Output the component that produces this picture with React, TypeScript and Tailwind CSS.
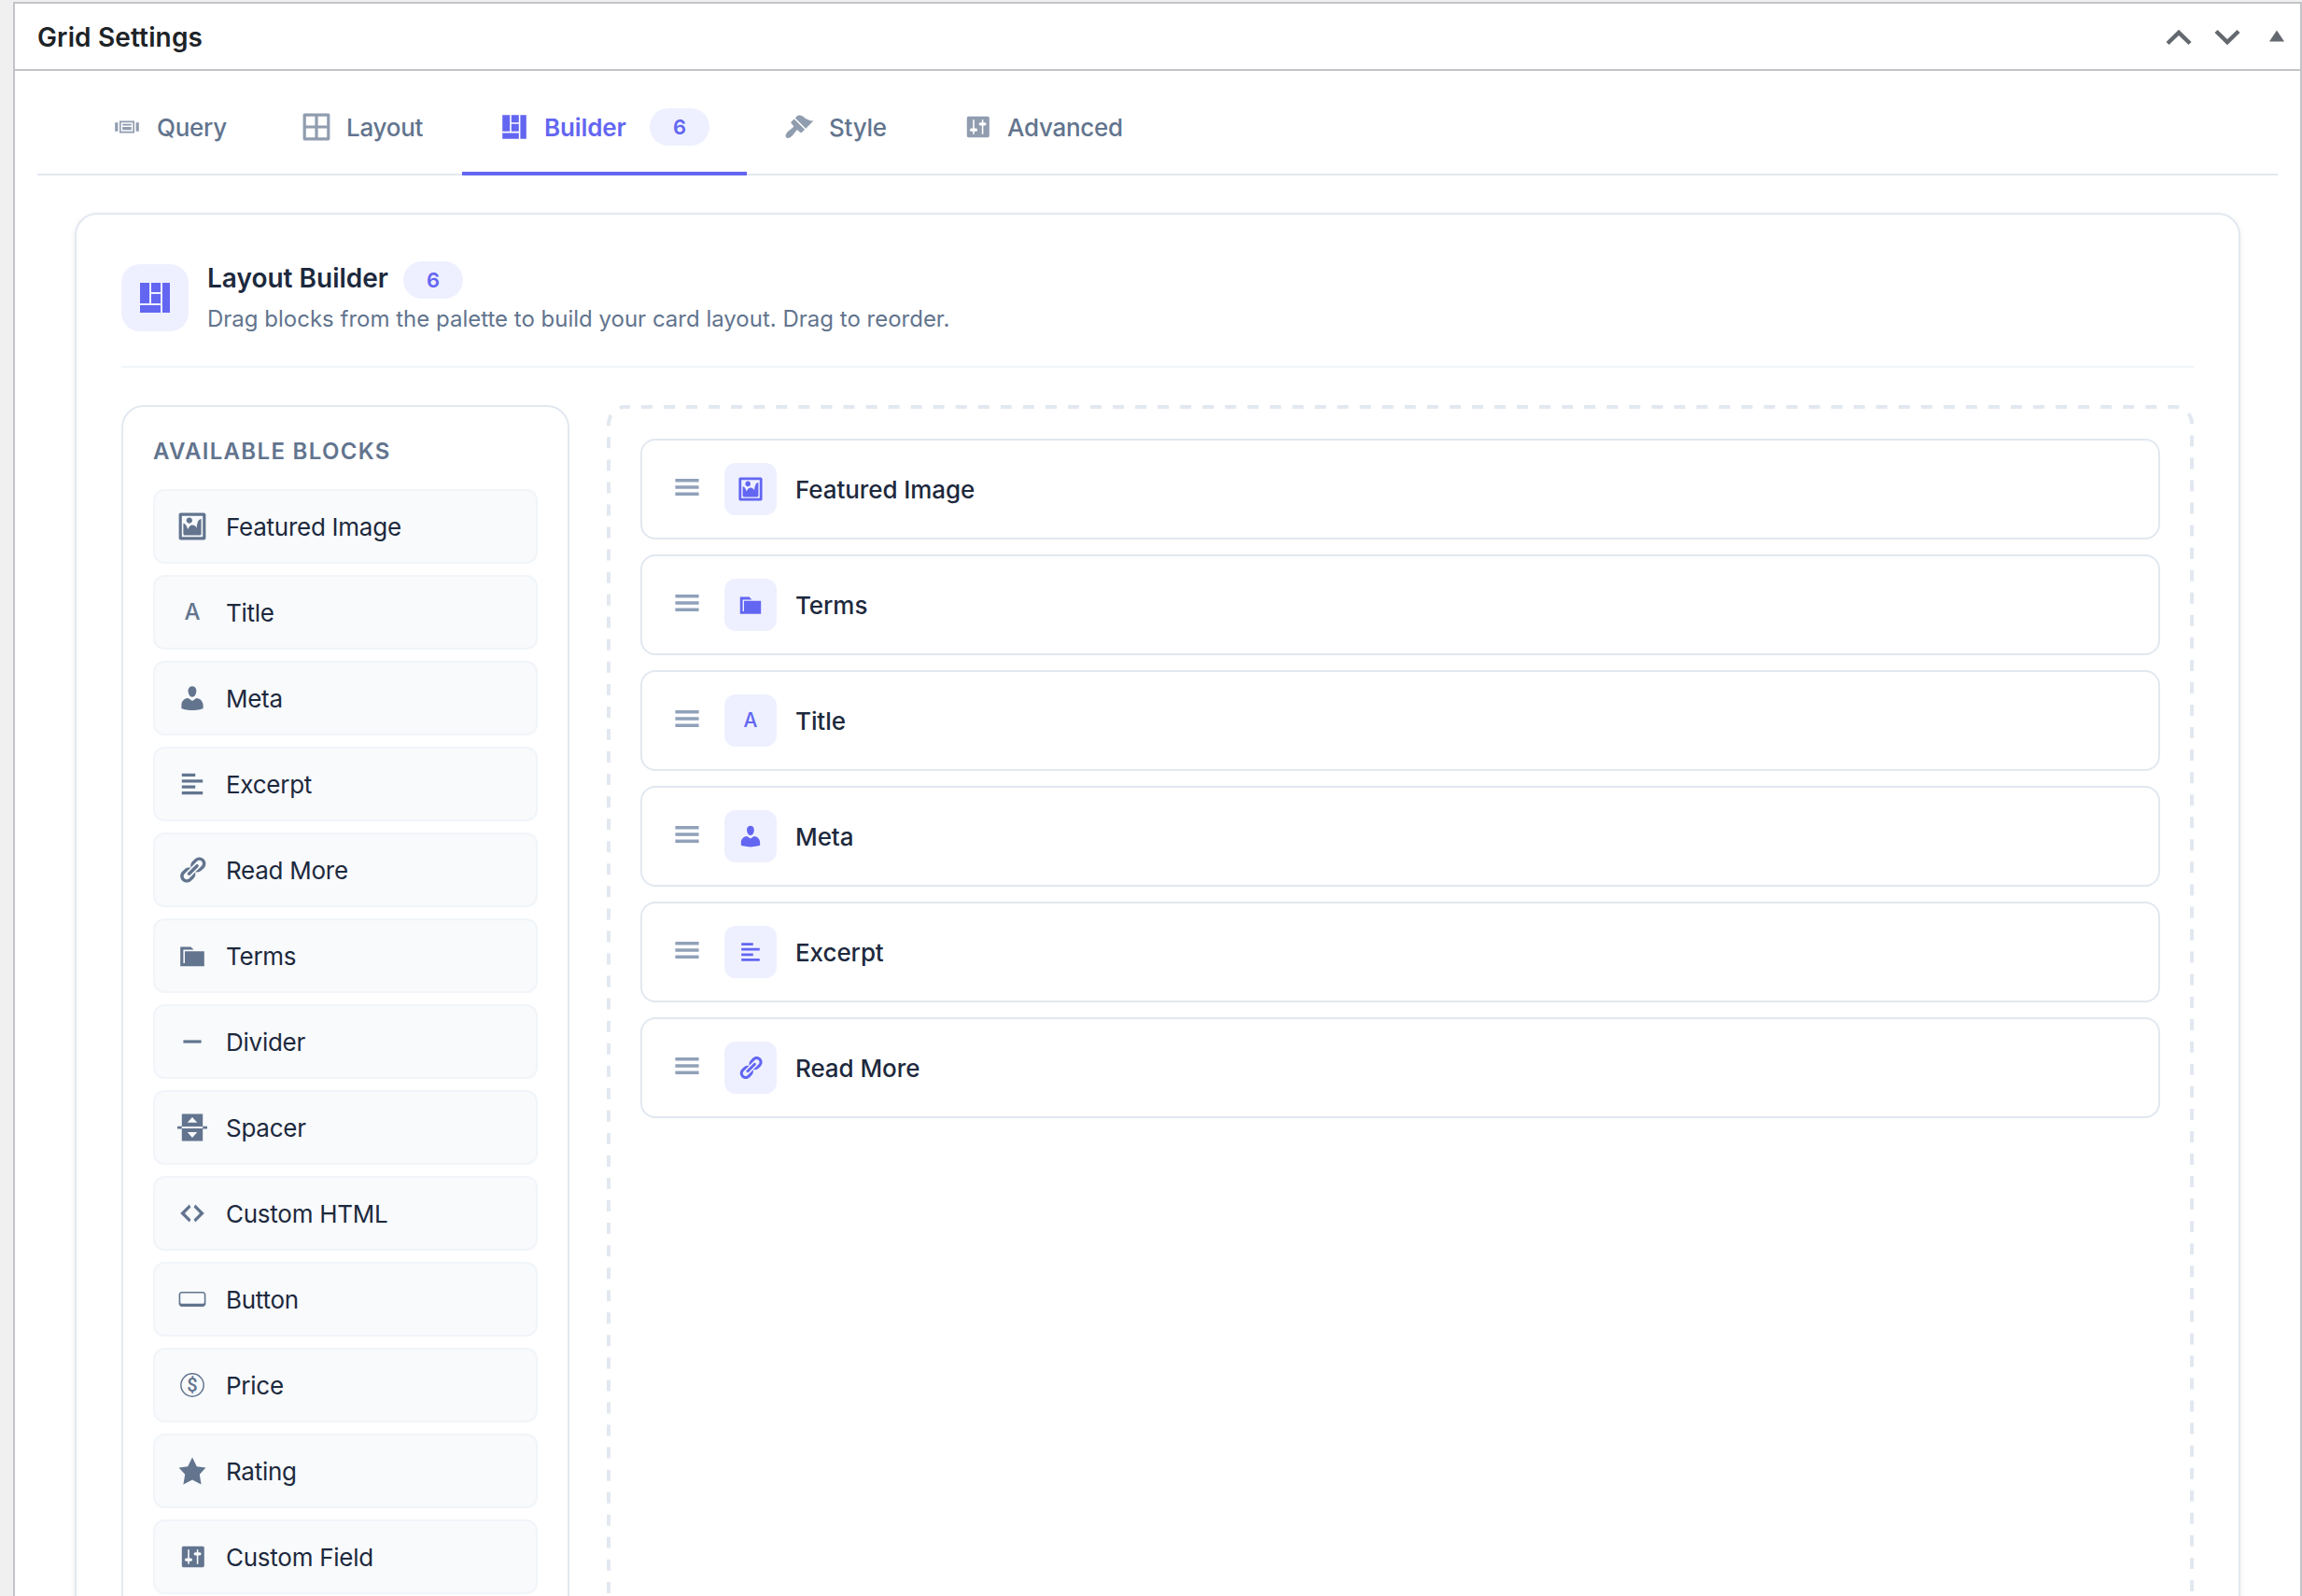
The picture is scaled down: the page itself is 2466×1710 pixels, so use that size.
import type { ReactNode } from 'react';

const paths = {
  slides: 'M5 14V6h10v8H5zm-3-1V7h2v6H2zm4-6v6h8V7H6zm10 0h2v6h-2V7zm-3 2V8H7v1h6zm0 3v-2H7v2h6z',
  grid: 'M2 1h16c.55 0 1 .45 1 1v16c0 .55-.45 1-1 1H2c-.55 0-1-.45-1-1V2c0-.55.45-1 1-1zm7.01 7.99v-6H3v6h6.01zm8 0v-6h-6v6h6zm-8 8.01v-6H3v6h6.01zm8 0v-6h-6v6h6z',
  layout: 'M2 2h5v11H2V2zm6 0h5v5H8V2zm6 0h4v16h-4V2zM8 8h5v5H8V8zm-6 6h11v4H2v-4z',
  brush: 'M14.48 11.06L7.41 3.99l1.5-1.5c.5-.56 2.3-.47 3.51.32 1.21.8 1.43 1.28 2.91 2.1 1.18.64 2.45 1.26 4.45.85zm-.71.71L6.7 4.7 4.93 6.47c-.39.39-.39 1.02 0 1.41l1.06 1.06c.39.39.39 1.03 0 1.42-.6.6-1.43 1.11-2.21 1.69-.35.26-.7.53-1.01.84C1.43 14.23.4 16.08 1.4 17.07c.99 1 2.84-.03 4.18-1.36.31-.31.58-.66.85-1.02.57-.78 1.08-1.61 1.69-2.21.39-.39 1.02-.39 1.41 0l1.06 1.06c.39.39 1.02.39 1.41 0z',
  settings: 'M18 16V4c0-.55-.45-1-1-1H4c-.55 0-1 .45-1 1v12c0 .55.45 1 1 1h13c.55 0 1-.45 1-1zM8 11h1c.55 0 1 .45 1 1s-.45 1-1 1H8v1.5c0 .28-.22.5-.5.5s-.5-.22-.5-.5V13H6c-.55 0-1-.45-1-1s.45-1 1-1h1V5.5c0-.28.22-.5.5-.5s.5.22.5.5V11zm5-2h-1c-.55 0-1-.45-1-1s.45-1 1-1h1V5.5c0-.28.22-.5.5-.5s.5.22.5.5V7h1c.55 0 1 .45 1 1s-.45 1-1 1h-1v5.5c0 .28-.22.5-.5.5s-.5-.22-.5-.5V9z',
  image: 'M2.25 1h15.5c.69 0 1.25.56 1.25 1.25v15.5c0 .69-.56 1.25-1.25 1.25H2.25C1.56 19 1 18.44 1 17.75V2.25C1 1.56 1.56 1 2.25 1zM17 17V3H3v14h14zM10 6c0-1.1-.9-2-2-2s-2 .9-2 2 .9 2 2 2 2-.9 2-2zm3 5s0-6 3-6v10c0 .55-.45 1-1 1H5c-.55 0-1-.45-1-1V8c2 0 3 4 3 4s1-3 3-3 3 2 3 2z',
  user: 'M10 9.25c-2.27 0-2.73-3.44-2.73-3.44C7 4.02 7.82 2 9.97 2c2.16 0 2.98 2.02 2.71 3.81 0 0-.41 3.44-2.68 3.44zm0 2.57L12.72 10c2.39 0 4.52 2.33 4.52 4.53v2.49s-3.65 1.13-7.24 1.13c-3.65 0-7.24-1.13-7.24-1.13v-2.49c0-2.25 1.94-4.48 4.47-4.48z',
  align: 'M12 5V3H3v2h9zm5 4V7H3v2h14zm-5 4v-2H3v2h9zm5 4v-2H3v2h14z',
  link: 'M17.74 2.76c1.68 1.69 1.68 4.41 0 6.1l-1.53 1.52c-1.12 1.12-2.7 1.47-4.14 1.09l2.62-2.61.76-.77.76-.76c.84-.84.84-2.2 0-3.04-.84-.85-2.2-.85-3.04 0l-.77.76-3.38 3.38c-.37-1.44-.02-3.02 1.1-4.14l1.52-1.53c1.69-1.68 4.42-1.68 6.1 0zM8.59 13.43l5.34-5.34c.42-.42.42-1.1 0-1.52-.44-.43-1.13-.39-1.53 0l-5.33 5.34c-.42.42-.42 1.1 0 1.52.44.43 1.13.39 1.52 0zm-.76 2.29l4.14-4.15c.38 1.44.03 3.02-1.09 4.14l-1.52 1.53c-1.69 1.68-4.41 1.68-6.1 0-1.68-1.68-1.68-4.42 0-6.1l1.53-1.52c1.12-1.12 2.7-1.47 4.14-1.1l-4.14 4.15c-.85.84-.85 2.2 0 3.05.84.84 2.2.84 3.04 0z',
  folder: 'M5 7h13v10H2V4h7l2 2H4v9h1V7z',
  minus: 'M4 9h12v2H4V9z',
  spacer: 'M3 1h14v8.4H3V1zm10.3 5.7L10 3.1 6.7 6.7h6.6zM0 9.2h3v1.7H0V9.2zm17 0h3v1.7h-3V9.2zM3 10.7h14V19H3v-8.3zm10.3 2.5H6.7l3.3 3.6 3.3-3.6z',
  code: 'M9 6l-4 4 4 4-1 2-6-6 6-6zm2 8l4-4-4-4 1-2 6 6-6 6z',
  button: 'M17 5H3c-1.1 0-2 .9-2 2v6c0 1.1.9 2 2 2h14c1.1 0 2-.9 2-2V7c0-1.1-.9-2-2-2zm1 7c0 .6-.5 1-1 1H3c-.5 0-1-.4-1-1V7c0-.6.5-1 1-1h14c.6 0 1 .4 1 1v5z',
  star: 'M10 1l3 6 6 .75-4.12 4.62L16 19l-6-3-6 3 1.13-6.63L1 7.75 7 7z',
  menu: 'M17 7V5H3v2h14zm0 4V9H3v2h14zm0 4v-2H3v2h14z',
};

type IconName = keyof typeof paths | 'letter' | 'money';

function Icon({ name, size, className = '' }: { name: IconName; size: number; className?: string }) {
  let body: ReactNode;
  if (name === 'letter') {
    body = <text x="10" y="15.3" textAnchor="middle" fontSize="15" fontWeight="450">A</text>;
  } else if (name === 'money') {
    body = (
      <>
        <circle cx="10" cy="10" r="7.6" fill="none" stroke="currentColor" strokeWidth="0.9" />
        <text x="10" y="14.5" textAnchor="middle" fontSize="12.5" className="font-['Roboto',sans-serif] font-medium">$</text>
      </>
    );
  } else {
    body = <path d={paths[name]} />;
  }
  return (
    <svg width={size} height={size} viewBox="0 0 20 20" fill="currentColor" className={`shrink-0 ${className}`}>
      {body}
    </svg>
  );
}

const tabs: { label: string; icon: IconName; width: string; count?: number }[] = [
  { label: 'Query', icon: 'slides', width: 'w-[203px]' },
  { label: 'Layout', icon: 'grid', width: 'w-[212px]' },
  { label: 'Builder', icon: 'layout', width: 'w-[305px]', count: 6 },
  { label: 'Style', icon: 'brush', width: 'w-[191px]' },
  { label: 'Advanced', icon: 'settings', width: 'w-[251px]' },
];

const palette: { label: string; icon: IconName }[] = [
  { label: 'Featured Image', icon: 'image' },
  { label: 'Title', icon: 'letter' },
  { label: 'Meta', icon: 'user' },
  { label: 'Excerpt', icon: 'align' },
  { label: 'Read More', icon: 'link' },
  { label: 'Terms', icon: 'folder' },
  { label: 'Divider', icon: 'minus' },
  { label: 'Spacer', icon: 'spacer' },
  { label: 'Custom HTML', icon: 'code' },
  { label: 'Button', icon: 'button' },
  { label: 'Price', icon: 'money' },
  { label: 'Rating', icon: 'star' },
  { label: 'Custom Field', icon: 'settings' },
];

const placed: { label: string; icon: IconName }[] = [
  { label: 'Featured Image', icon: 'image' },
  { label: 'Terms', icon: 'folder' },
  { label: 'Title', icon: 'letter' },
  { label: 'Meta', icon: 'user' },
  { label: 'Excerpt', icon: 'align' },
  { label: 'Read More', icon: 'link' },
];

function Badge({ children, className = '' }: { children: ReactNode; className?: string }) {
  return (
    <span className={`flex h-10 w-16 shrink-0 items-center justify-center rounded-full bg-[#eef0ff] text-[22px] font-semibold text-[#6366f1] ${className}`}>
      {children}
    </span>
  );
}

export default function App() {
  return (
    <div className="h-screen overflow-hidden bg-[#f0f0f1] pt-0.5 pl-3.5 font-['Inter',sans-serif] whitespace-nowrap text-slate-800">
      <div className="h-[2200px] border-2 border-[#c3c4c7] bg-white">
        {/* Metabox header */}
        <div className="flex h-[72px] items-center justify-between border-b-2 border-[#c3c4c7] pr-[17px] pl-6">
          <h2 className="pt-0.5 text-[28px] font-semibold tracking-[0.005em] text-[#1d2327]">Grid Settings</h2>
          <div className="flex items-center pt-px text-[#646970]">
            <svg width="28" height="18" viewBox="0 0 28 18" fill="none" stroke="currentColor" strokeWidth="4.4">
              <path d="M2 15.5L14 3.8l12 11.7" />
            </svg>
            <svg width="28" height="18" viewBox="0 0 28 18" fill="none" stroke="currentColor" strokeWidth="4.4" className="ml-6">
              <path d="M2 2.5l12 11.7L26 2.5" />
            </svg>
            <svg width="16" height="16" viewBox="0 0 16 16" fill="currentColor" className="ml-[31px]">
              <path d="M0 12.5L8 .5l8 12z" />
            </svg>
          </div>
        </div>

        {/* Tabs */}
        <div className="mx-6 mt-3 flex h-[100px] border-b-2 border-slate-200 pl-10">
          {tabs.map(({ label, icon, width, count }) => (
            <div
              key={label}
              className={`flex h-[100px] items-center gap-4 border-b-4 px-10 text-[26px] font-medium ${width} ${
                count ? 'border-[#6366f1] text-[#6366f1]' : 'border-transparent text-slate-500'
              }`}
            >
              <Icon name={icon} size={32} className={count ? '' : 'opacity-70'} />
              <span className={count ? 'font-semibold tracking-[-0.005em]' : 'tracking-[-0.01em]'}>{label}</span>
              {count && <Badge className="ml-auto">{count}</Badge>}
            </div>
          ))}
        </div>

        {/* Builder panel */}
        <div className="mx-16 mt-10 flex h-[1900px] flex-col rounded-3xl border-2 border-slate-200 p-12 shadow-[0_2px_6px_rgba(0,0,0,0.08)]">
          <div className="flex h-[116px] shrink-0 items-center gap-5 border-b-2 border-slate-100 pb-8">
            <div className="flex size-[72px] items-center justify-center rounded-[20px] bg-[#eef0ff] text-[#6366f1]">
              <Icon name="layout" size={40} />
            </div>
            <div className="h-[82px] pt-0.5">
              <div className="flex items-center gap-4">
                <h3 className="h-10 text-[28px] leading-9 font-semibold">Layout Builder</h3>
                <Badge>6</Badge>
              </div>
              <p className="text-2xl leading-[44px] text-slate-500">
                Drag blocks from the palette to build your card layout. Drag to reorder.
              </p>
            </div>
          </div>

          <div className="mt-10 flex flex-1 gap-10">
            <div className="w-[480px] shrink-0 rounded-3xl border-2 border-slate-200 p-8">
              <h4 className="mb-6 text-2xl leading-8 font-semibold tracking-[0.055em] text-slate-500">AVAILABLE BLOCKS</h4>
              <div className="flex flex-col gap-3">
                {palette.map(({ label, icon }) => (
                  <div key={label} className="flex h-20 items-center gap-5 rounded-xl border-2 border-slate-100 bg-slate-50 px-6">
                    <Icon name={icon} size={32} className="text-slate-500" />
                    <span className="pt-px text-[26px] tracking-[-0.01em]">{label}</span>
                  </div>
                ))}
              </div>
            </div>

            <div className="relative flex flex-1 flex-col gap-4 p-9">
              {/* Drop zone outline: even 12px dashes */}
              <svg width="1700" height="1402" fill="none" className="pointer-events-none absolute top-0 left-0 text-slate-200">
                <rect
                  x="2"
                  y="2"
                  width="1696"
                  height="1397.85"
                  rx="18"
                  stroke="currentColor"
                  strokeWidth="4"
                  strokeDasharray="12 12.05"
                  strokeDashoffset="-17"
                />
              </svg>
              {placed.map(({ label, icon }) => (
                <div key={label} className="flex h-[108px] items-center gap-5 rounded-2xl border-2 border-slate-200 bg-white px-7">
                  <div className="flex w-10 justify-center pb-1 text-slate-400">
                    <Icon name="menu" size={36} />
                  </div>
                  <div className="flex size-14 items-center justify-center rounded-xl bg-[#eef0ff] text-[#6366f1]">
                    <Icon name={icon} size={28} />
                  </div>
                  <span className="pt-px text-[26px] font-medium tracking-[-0.003em]">{label}</span>
                </div>
              ))}
            </div>
          </div>
        </div>
      </div>
    </div>
  );
}
